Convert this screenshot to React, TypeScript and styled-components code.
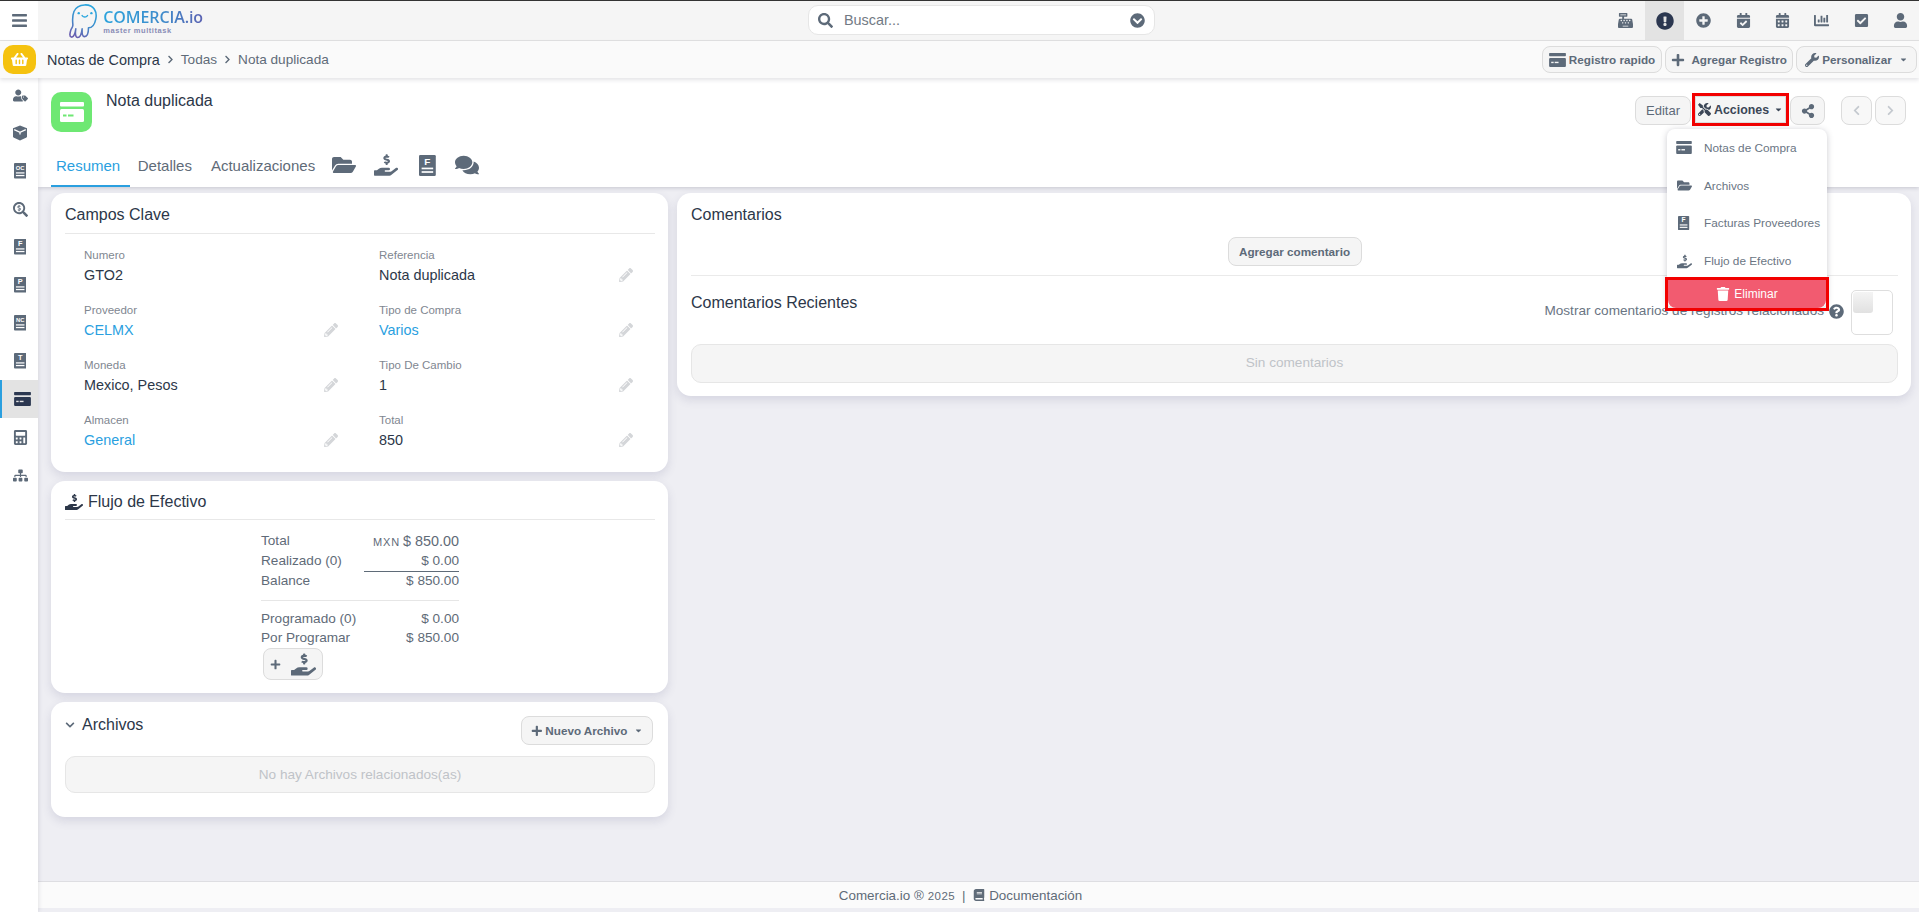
import React from "react";
import styled, { createGlobalStyle } from "styled-components";
import {
  FaBars, FaShoppingBasket, FaSearch, FaChevronCircleDown, FaCashRegister, FaExclamationCircle,
  FaPlusCircle, FaCalendarCheck, FaCalendarAlt, FaChartBar, FaCheckSquare, FaUser,
  FaPlus, FaWrench, FaCaretDown, FaUserTag, FaSearchDollar, FaCalculator, FaSitemap,
  FaTools, FaShareAlt, FaChevronLeft, FaChevronRight, FaFolderOpen, FaHandHoldingUsd, FaComments,
  FaPencilAlt, FaTrash, FaQuestionCircle, FaBook, FaChevronDown,
} from "react-icons/fa";

const Global = createGlobalStyle`
  html, body { margin: 0; padding: 0; height: 100%; overflow: hidden; }
  body { background: #eeeef3; font-family: "Liberation Sans", Arial, sans-serif; color: #2c3749; }
  * { box-sizing: border-box; }
`;

const slate = "#5d6a79";

const Page = styled.div`
  height: 912px;
  display: flex;
  flex-direction: column;
`;

/* top bar */
const TopBar = styled.header`
  height: 41px;
  flex: none;
  display: flex;
  align-items: stretch;
  background: #f5f5f5;
  border-top: 1px solid #333;
  border-bottom: 1px solid #e2e2e2;
`;
const MenuCell = styled.div`
  width: 38px;
  background: #fff;
  display: flex;
  align-items: center;
  justify-content: center;
  color: ${slate};
  font-size: 17px;
`;
const Logo = styled.div`
  width: 135px;
  margin-left: 30px;
  display: flex;
  align-items: center;
  gap: 6px;
`;
const LogoWords = styled.div`
  display: flex;
  flex-direction: column;
  padding-top: 2px;
`;
const LogoName = styled.span`
  font-family: "Open Sans", sans-serif;
  font-weight: 600;
  font-size: 16px;
  line-height: 17px;
  letter-spacing: -0.1px;
  white-space: nowrap;
  background: linear-gradient(90deg, #2ba3dc, #3f8bcb 60%, #5b62b2);
  -webkit-background-clip: text;
  background-clip: text;
  color: transparent;
`;
const LogoTag = styled.span`
  font-size: 7.5px;
  line-height: 9px;
  letter-spacing: 0.55px;
  font-weight: 700;
  color: #8a8db5;
  white-space: nowrap;
`;
const SearchBox = styled.div`
  width: 347px;
  height: 30px;
  margin: 4px 0 0 605px;
  background: #fff;
  border: 1px solid #e6e6e6;
  border-radius: 10px;
  display: flex;
  align-items: center;
  padding: 0 9px;
  color: ${slate};
  font-size: 15px;
`;
const SearchText = styled.span`
  margin-left: 11px;
  flex: 1;
  font-size: 14.4px;
  color: #727a84;
`;
const TopIcons = styled.nav`
  margin: 0 -1px 0 auto;
  display: flex;
`;
const TopIcon = styled.div<{ $active?: boolean }>`
  width: 39.3px;
  display: flex;
  align-items: center;
  justify-content: center;
  font-size: ${(p) => (p.$active ? 18 : 15)}px;
  color: ${(p) => (p.$active ? "#2b3750" : slate)};
  background: ${(p) => (p.$active ? "#e3e3e3" : "transparent")};
`;

/* breadcrumb */
const CrumbBar = styled.div`
  height: 37px;
  flex: none;
  position: relative;
  z-index: 3;
  background: #fafafa;
  box-shadow: 0 2px 4px rgba(60, 60, 80, 0.14);
  display: flex;
  align-items: center;
  padding: 0 2px 0 3px;
`;
const Basket = styled.div`
  width: 33px;
  height: 29px;
  border-radius: 10px;
  background: #f5c20f;
  color: #fff;
  font-size: 17px;
  display: flex;
  align-items: center;
  justify-content: center;
  margin-right: 11px;
`;
const Crumb = styled.span<{ $root?: boolean }>`
  font-size: ${(p) => (p.$root ? 14.4 : 13.6)}px;
  color: ${(p) => (p.$root ? "#2c3749" : "#5f6b78")};
`;
const CrumbSep = styled.span`
  display: inline-flex;
  margin: 0 6px;
  font-size: 9px;
  color: ${slate};
`;
const CrumbActions = styled.div`
  margin-left: auto;
  display: flex;
  gap: 3px;
`;
const Button = styled.button<{ $h?: number; $w?: number; $size?: number }>`
  height: ${(p) => p.$h ?? 29}px;
  ${(p) => (p.$w ? `width: ${p.$w}px;` : "")}
  padding: 0;
  display: inline-flex;
  align-items: center;
  justify-content: center;
  gap: 3px;
  border: 1px solid #dcdcdc;
  border-radius: 8px;
  background: #f5f5f5;
  color: ${slate};
  font-family: inherit;
  font-weight: 700;
  font-size: ${(p) => p.$size ?? 11.7}px;
  white-space: nowrap;
`;
const BarIconPlus = styled(FaPlus)`
  font-size: 14px;
`;
const BarIconWrench = styled(FaWrench)`
  font-size: 14px;
`;
const Caret = styled(FaCaretDown)`
  font-size: 9px;
  margin-left: 4px;
`;

/* body */
const Body = styled.div`
  flex: 1;
  min-height: 0;
  display: flex;
`;
const Sidebar = styled.aside`
  width: 38px;
  flex: none;
  margin-top: -2px;
  background: #fff;
  box-shadow: 1px 0 4px rgba(60, 60, 80, 0.12);
  position: relative;
  z-index: 2;
`;
const SideItem = styled.div<{ $active?: boolean }>`
  height: 38px;
  padding-left: ${(p) => (p.$active ? 7 : 2)}px;
  display: flex;
  align-items: center;
  justify-content: center;
  font-size: 15px;
  color: ${(p) => (p.$active ? "#2b3750" : slate)};
  background: ${(p) => (p.$active ? "#e3e3e3" : "transparent")};
  box-shadow: ${(p) => (p.$active ? "inset 2px 0 0 #2a9fdf" : "none")};
`;
const Main = styled.main`
  flex: 1;
  min-width: 0;
  display: flex;
  flex-direction: column;
`;
const PageHeader = styled.section`
  height: 109px;
  flex: none;
  background: #fff;
  box-shadow: 0 1px 4px rgba(60, 60, 80, 0.22);
  position: relative;
  z-index: 1;
  display: flex;
  flex-direction: column;
  justify-content: space-between;
`;
const HeaderTop = styled.div`
  display: flex;
  padding: 14px 13px 0;
`;
const GreenIcon = styled.div`
  width: 41px;
  height: 40px;
  border-radius: 10px;
  background: #6ee873;
  display: flex;
  align-items: center;
  justify-content: center;
`;
const Title = styled.h1`
  margin: 0 0 0 14px;
  font-size: 16px;
  font-weight: 400;
  line-height: 18px;
`;
const Actions = styled.div`
  margin: 4px 0 0 auto;
  display: flex;
  align-items: flex-start;
  position: relative;
`;
const ActionGroup = styled.div`
  display: flex;
  align-items: flex-start;
  gap: 4px;
  margin-right: 13px;
`;
const EditButton = styled(Button)`
  font-weight: 400;
  font-size: 13px;
`;
const AccionesButton = styled(Button)`
  outline: 3px solid #f20000;
  border-radius: 0;
  color: #3b4656;
  font-size: 12.4px;
`;
const AccionesCaret = styled(Caret)`
  margin-left: 2px;
`;
const ToolsIcon = styled(FaTools)`
  font-size: 13px;
`;
const ShareButton = styled(Button)`
  font-size: 14px;
`;
const NavButton = styled(Button)`
  color: #c4c9cf;
  background: #f8f8f8;
  font-size: 11px;
  margin-left: 3px;
`;
const Menu = styled.div`
  position: absolute;
  top: 33px;
  left: 32px;
  width: 160px;
  height: 179px;
  background: #fff;
  border-radius: 8px;
  box-shadow: 0 1px 6px rgba(50, 50, 70, 0.25);
  z-index: 10;
`;
const MenuItem = styled.div`
  height: 37.75px;
  display: flex;
  align-items: center;
  gap: 12px;
  padding-left: 9px;
  font-size: 11.8px;
  color: #6a7583;
`;
const MenuIcon = styled.span`
  width: 16px;
  display: flex;
  justify-content: center;
  font-size: 15px;
  color: ${slate};
`;
const DeleteItem = styled.div`
  position: absolute;
  left: 1px;
  right: 1px;
  bottom: 0;
  height: 28px;
  border-radius: 0 0 8px 8px;
  background: #f25b70;
  color: #fff;
  font-size: 12px;
  display: flex;
  align-items: center;
  justify-content: center;
  gap: 4px;
  &::after {
    content: "";
    position: absolute;
    inset: -3px;
    border: 3px solid #f20000;
  }
`;
const TrashIcon = styled(FaTrash)`
  font-size: 14px;
`;
const Tabs = styled.div`
  display: flex;
  align-items: center;
  height: 40px;
  margin-left: 13px;
`;
const Tab = styled.div<{ $active?: boolean; $mr: number }>`
  height: 100%;
  display: flex;
  align-items: center;
  padding: 0 10px 2px 5px;
  margin-right: ${(p) => p.$mr}px;
  font-size: 15px;
  color: ${(p) => (p.$active ? "#2a9fdf" : "#5f6b78")};
  border-bottom: 2px solid ${(p) => (p.$active ? "#2a9fdf" : "transparent")};
`;
const TabIcon = styled.span<{ $mr: number }>`
  display: flex;
  font-size: 24px;
  color: ${slate};
  margin: 0 ${(p) => p.$mr}px 4px 0;
`;

/* content */
const Content = styled.div`
  flex: 1;
  min-height: 0;
  display: grid;
  grid-template-columns: 617px 1fr;
  column-gap: 9px;
  align-items: start;
  padding: 6px 8px 0 13px;
`;
const Column = styled.div`
  display: flex;
  flex-direction: column;
  gap: 9px;
`;
const Card = styled.section`
  background: #fff;
  border-radius: 14px;
  padding: 0 13px 0 14px;
  box-shadow: 0 4px 10px rgba(90, 90, 130, 0.16);
`;
const CardHead = styled.div<{ $h: number }>`
  height: ${(p) => p.$h}px;
  padding-top: 3px;
  display: flex;
  align-items: center;
  gap: 5px;
  border-bottom: 1px solid #e8e8e8;
`;
const CardTitle = styled.h2`
  margin: 0;
  font-size: 16px;
  font-weight: 400;
  line-height: 18px;
  color: #2c3749;
`;
const FieldGrid = styled.div`
  display: grid;
  grid-template-columns: 295px 295px;
  row-gap: 19px;
  padding: 14px 0 23px;
`;
const Field = styled.div`
  padding: 0 22px 0 19px;
`;
const FieldLabel = styled.div`
  font-size: 11.5px;
  line-height: 14px;
  color: #7f8791;
  margin-bottom: 4px;
`;
const FieldValue = styled.div<{ $link?: boolean }>`
  height: 18px;
  display: flex;
  align-items: center;
  justify-content: space-between;
  font-size: 14.4px;
  color: ${(p) => (p.$link ? "#2a9fdf" : "#2c3749")};
`;
const Pencil = styled(FaPencilAlt)`
  font-size: 14px;
  color: #d4d6d9;
`;
const FlowIcon = styled(FaHandHoldingUsd)`
  font-size: 18px;
  color: #2c3749;
`;
const FlowTable = styled.div`
  width: 198px;
  margin: 11px auto 0;
`;
const FlowRow = styled.div<{ $h?: number }>`
  height: ${(p) => p.$h ?? 20}px;
  display: flex;
  justify-content: space-between;
  align-items: flex-start;
  font-size: 13.6px;
  line-height: 20px;
  color: #5f6b78;
`;
const FlowValue = styled.span<{ $under?: boolean }>`
  ${(p) => (p.$under ? "width: 95px; height: 21px; border-bottom: 1px solid #5f6b78;" : "")}
  text-align: right;
`;
const TotalAmount = styled.span`
  font-size: 14.4px;
`;
const Currency = styled.span`
  font-size: 11px;
  margin-right: 3px;
  letter-spacing: 0.8px;
`;
const FlowRule = styled.hr`
  margin: 9px 0 8px;
  border: 0;
  border-top: 1px solid #e6e6e6;
`;
const FlowButton = styled(Button)`
  width: 60px;
  height: 32px;
  margin: 0 0 13px 2px;
  gap: 10px;
  font-size: 11px;
  align-items: center;
`;
const FlowButtonHand = styled(FaHandHoldingUsd)`
  font-size: 25px;
`;
const FilesHead = styled.div`
  display: flex;
  align-items: flex-start;
  padding-top: 14px;
`;
const FilesTitle = styled.div`
  display: flex;
  align-items: center;
  gap: 7px;
`;
const Chevron = styled(FaChevronDown)`
  font-size: 10px;
  color: ${slate};
`;
const NewFile = styled(Button)`
  margin: 0 2px 0 auto;
  width: 132px;
`;
const EmptyBox = styled.div`
  height: 37px;
  border: 1px solid #e6e6e6;
  border-radius: 10px;
  background: #f5f5f5;
  color: #bfc3c8;
  font-size: 13.6px;
  display: flex;
  align-items: center;
  justify-content: center;
`;
const FilesBox = styled(EmptyBox)`
  margin: 11px 0 24px;
`;
const CommentsHead = styled.div`
  height: 40px;
  padding-top: 3px;
  display: flex;
  align-items: center;
`;
const CommentAction = styled.div`
  display: flex;
  justify-content: center;
  padding: 4px 0 9px;
  border-bottom: 1px solid #eaeaea;
`;
const AddComment = styled(Button)`
  width: 134px;
`;
const RecentRow = styled.div`
  height: 68px;
  display: flex;
  justify-content: space-between;
`;
const RecentTitle = styled(CardTitle)`
  margin-top: 18px;
`;
const RelatedToggle = styled.div`
  display: flex;
  align-items: flex-start;
  margin: 14px 5px 0 0;
`;
const RelatedText = styled.span`
  margin-top: 13px;
  font-size: 13.6px;
  line-height: 16px;
  color: #6a7583;
`;
const Help = styled(FaQuestionCircle)`
  margin: 14px 7px 0 5px;
  font-size: 15px;
  color: ${slate};
`;
const Toggle = styled.div`
  width: 42px;
  height: 45px;
  padding: 1px;
  border: 1px solid #dedede;
  border-radius: 5px;
  background: #fff;
`;
const Knob = styled.div`
  width: 20px;
  height: 21px;
  border-radius: 3px 0 3px 3px;
  background: linear-gradient(180deg, #f4f4f4, #e1e1e1);
`;
const CommentsBox = styled(EmptyBox)`
  height: 39px;
  margin-bottom: 13px;
  padding-bottom: 2px;
`;
const Footer = styled.footer`
  height: 27px;
  flex: none;
  margin-bottom: 4px;
  padding-right: 36px;
  display: flex;
  align-items: center;
  justify-content: center;
  gap: 4px;
  background: #fbfbfb;
  border-top: 1px solid #dedee2;
  font-size: 13.4px;
  color: #5f6b78;
`;
const FootYear = styled.span`
  font-size: 11.5px;
  letter-spacing: 0.4px;
  margin: 1px 3px 0 0;
`;
const FootBook = styled(FaBook)`
  font-size: 12px;
`;

/* drawn icons */
const CardGlyph: React.FC<{ w: number; h: number; color: string; mark: string }> = ({ w, h, color, mark }) => (
  <svg width={w} height={h} viewBox="0 0 24 20" aria-hidden="true">
    <rect x="0" y="0" width="24" height="4.5" rx="1" fill={color} />
    <rect x="0" y="7" width="24" height="13" rx="1.5" fill={color} />
    <rect x="3" y="12.5" width="3.5" height="2" fill={mark} />
    <rect x="8" y="12.5" width="5.5" height="2" fill={mark} />
  </svg>
);

const DocGlyph: React.FC<{ letter: string; size?: number }> = ({ letter, size = 20 }) => (
  <svg width={size * 0.8} height={size} viewBox="0 0 16 20" aria-hidden="true">
    <rect x="0" y="0" width="16" height="20" rx="1.2" fill={slate} />
    <text
      x="8"
      y="9.2"
      textAnchor="middle"
      fontFamily="Liberation Sans, sans-serif"
      fontWeight="700"
      fontSize={letter.length > 1 ? 7.5 : 9.5}
      fill="#fff"
    >
      {letter}
    </text>
    <rect x="2.5" y="12" width="11" height="1.6" fill="#fff" />
    <rect x="2.5" y="15.4" width="11" height="1.6" fill="#fff" />
  </svg>
);

const BoxGlyph: React.FC = () => (
  <svg width="16" height="16" viewBox="0 0 16 16" aria-hidden="true">
    <path d="M8 0.5 L15 3.2 V11.2 C15 12 14.6 12.5 14 12.8 L8 15.5 L2 12.8 C1.4 12.5 1 12 1 11.2 V3.2 Z" fill={slate} />
    <path d="M2.2 4.6 L8 7.4 L13.8 4.6" fill="none" stroke="#fff" strokeWidth="1.3" />
    <path d="M8 7.4 V9.5" fill="none" stroke="#fff" strokeWidth="1.3" />
  </svg>
);

const Octopus: React.FC = () => (
  <svg width="30" height="36" viewBox="0 0 30 36" fill="none" aria-hidden="true">
    <defs>
      <linearGradient id="octo" x1="0.7" y1="0" x2="0.3" y2="1">
        <stop offset="0" stopColor="#2aa6de" />
        <stop offset="0.55" stopColor="#3f8ccb" />
        <stop offset="1" stopColor="#6a5fb0" />
      </linearGradient>
    </defs>
    <path
      d="M5 22 C4 12 5 2 17 1.5 C27 1 30 9 28.5 16 C27.5 21 25 25 21 25 C21 29 20 34 17 34 C14 34 14.5 29 14.5 26 C14 30 13 35 10 35 C7 35 7.5 29 8 26 C7.5 30 6 35 3.5 34.5 C1 34 2 30 3 27 C4 25 5 24 5 22 Z"
      stroke="url(#octo)"
      strokeWidth="1.6"
      strokeLinejoin="round"
    />
    <circle cx="11" cy="10" r="1.2" fill="#2aa6de" />
    <circle cx="24" cy="10" r="1.2" fill="#2aa6de" />
    <path d="M14.5 12.5 C16 14.5 18.5 14.5 20 12.5" stroke="#2aa6de" strokeWidth="1.5" strokeLinecap="round" />
  </svg>
);

const fields = [
  { l: "Numero", v: "GTO2", noEdit: true },
  { l: "Referencia", v: "Nota duplicada" },
  { l: "Proveedor", v: "CELMX", link: true },
  { l: "Tipo de Compra", v: "Varios", link: true },
  { l: "Moneda", v: "Mexico, Pesos" },
  { l: "Tipo De Cambio", v: "1" },
  { l: "Almacen", v: "General", link: true },
  { l: "Total", v: "850" },
];

export default function App() {
  return (
    <Page>
      <Global />
      <TopBar>
        <MenuCell><FaBars /></MenuCell>
        <Logo>
          <Octopus />
          <LogoWords>
            <LogoName>COMERCIA.io</LogoName>
            <LogoTag>master multitask</LogoTag>
          </LogoWords>
        </Logo>
        <SearchBox>
          <FaSearch />
          <SearchText>Buscar...</SearchText>
          <FaChevronCircleDown />
        </SearchBox>
        <TopIcons>
          <TopIcon><FaCashRegister /></TopIcon>
          <TopIcon $active><FaExclamationCircle /></TopIcon>
          <TopIcon><FaPlusCircle /></TopIcon>
          <TopIcon><FaCalendarCheck /></TopIcon>
          <TopIcon><FaCalendarAlt /></TopIcon>
          <TopIcon><FaChartBar /></TopIcon>
          <TopIcon><FaCheckSquare /></TopIcon>
          <TopIcon><FaUser /></TopIcon>
        </TopIcons>
      </TopBar>

      <CrumbBar>
        <Basket><FaShoppingBasket /></Basket>
        <Crumb $root>Notas de Compra</Crumb>
        <CrumbSep><FaChevronRight /></CrumbSep>
        <Crumb>Todas</Crumb>
        <CrumbSep><FaChevronRight /></CrumbSep>
        <Crumb>Nota duplicada</Crumb>
        <CrumbActions>
          <Button $h={27} $w={120}><CardGlyph w={17} h={14} color={slate} mark="#f5f5f5" />Registro rapido</Button>
          <Button $h={27} $w={128}><BarIconPlus />&nbsp;Agregar Registro</Button>
          <Button $h={27} $w={121}><BarIconWrench />Personalizar<Caret /></Button>
        </CrumbActions>
      </CrumbBar>

      <Body>
        <Sidebar>
          <SideItem><FaUserTag /></SideItem>
          <SideItem><BoxGlyph /></SideItem>
          <SideItem><DocGlyph letter="OC" size={15.5} /></SideItem>
          <SideItem><FaSearchDollar /></SideItem>
          <SideItem><DocGlyph letter="F" size={15.5} /></SideItem>
          <SideItem><DocGlyph letter="P" size={15.5} /></SideItem>
          <SideItem><DocGlyph letter="NC" size={15.5} /></SideItem>
          <SideItem><DocGlyph letter="T" size={15.5} /></SideItem>
          <SideItem $active><CardGlyph w={17} h={14} color="#2b3750" mark="#e3e3e3" /></SideItem>
          <SideItem><FaCalculator /></SideItem>
          <SideItem><FaSitemap /></SideItem>
        </Sidebar>

        <Main>
          <PageHeader>
            <HeaderTop>
              <GreenIcon><CardGlyph w={24} h={20} color="#fff" mark="#6ee873" /></GreenIcon>
              <Title>Nota duplicada</Title>
              <Actions>
                <ActionGroup>
                  <EditButton $w={56}>Editar</EditButton>
                  <AccionesButton $w={91} $h={27}><ToolsIcon />Acciones<AccionesCaret /></AccionesButton>
                  <ShareButton $w={35}><FaShareAlt /></ShareButton>
                </ActionGroup>
                <NavButton $w={31}><FaChevronLeft /></NavButton>
                <NavButton $w={31}><FaChevronRight /></NavButton>
                <Menu>
                  <MenuItem><MenuIcon><CardGlyph w={16} h={13} color={slate} mark="#fff" /></MenuIcon>Notas de Compra</MenuItem>
                  <MenuItem><MenuIcon><FaFolderOpen /></MenuIcon>Archivos</MenuItem>
                  <MenuItem><MenuIcon><DocGlyph letter="F" size={14} /></MenuIcon>Facturas Proveedores</MenuItem>
                  <MenuItem><MenuIcon><FaHandHoldingUsd /></MenuIcon>Flujo de Efectivo</MenuItem>
                  <DeleteItem><TrashIcon />Eliminar</DeleteItem>
                </Menu>
              </Actions>
            </HeaderTop>
            <Tabs>
              <Tab $active $mr={2.5}>Resumen</Tab>
              <Tab $mr={4}>Detalles</Tab>
              <Tab $mr={7}>Actualizaciones</Tab>
              <TabIcon $mr={18}><FaFolderOpen /></TabIcon>
              <TabIcon $mr={21}><FaHandHoldingUsd /></TabIcon>
              <TabIcon $mr={19}><DocGlyph letter="F" size={21} /></TabIcon>
              <TabIcon $mr={0}><FaComments /></TabIcon>
            </Tabs>
          </PageHeader>

          <Content>
            <Column>
              <Card>
                <CardHead $h={41}><CardTitle>Campos Clave</CardTitle></CardHead>
                <FieldGrid>
                  {fields.map((f) => (
                    <Field key={f.l}>
                      <FieldLabel>{f.l}</FieldLabel>
                      <FieldValue $link={f.link}>
                        {f.v}
                        {!f.noEdit && <Pencil />}
                      </FieldValue>
                    </Field>
                  ))}
                </FieldGrid>
              </Card>
              <Card>
                <CardHead $h={39}><FlowIcon /><CardTitle>Flujo de Efectivo</CardTitle></CardHead>
                <FlowTable>
                  <FlowRow><span>Total</span><span><Currency>MXN</Currency><TotalAmount>$ 850.00</TotalAmount></span></FlowRow>
                  <FlowRow $h={20}><span>Realizado (0)</span><FlowValue $under>$ 0.00</FlowValue></FlowRow>
                  <FlowRow><span>Balance</span><span>$ 850.00</span></FlowRow>
                  <FlowRule />
                  <FlowRow $h={19}><span>Programado (0)</span><span>$ 0.00</span></FlowRow>
                  <FlowRow><span>Por Programar</span><span>$ 850.00</span></FlowRow>
                  <FlowButton><FaPlus /><FlowButtonHand /></FlowButton>
                </FlowTable>
              </Card>
              <Card>
                <FilesHead>
                  <FilesTitle><Chevron /><CardTitle>Archivos</CardTitle></FilesTitle>
                  <NewFile><FaPlus />Nuevo Archivo<Caret /></NewFile>
                </FilesHead>
                <FilesBox>No hay Archivos relacionados(as)</FilesBox>
              </Card>
            </Column>
            <Card>
              <CommentsHead><CardTitle>Comentarios</CardTitle></CommentsHead>
              <CommentAction><AddComment>Agregar comentario</AddComment></CommentAction>
              <RecentRow>
                <RecentTitle>Comentarios Recientes</RecentTitle>
                <RelatedToggle>
                  <RelatedText>Mostrar comentarios de registros relacionados</RelatedText>
                  <Help />
                  <Toggle><Knob /></Toggle>
                </RelatedToggle>
              </RecentRow>
              <CommentsBox>Sin comentarios</CommentsBox>
            </Card>
          </Content>

          <Footer>
            Comercia.io ®
            <FootYear>2025</FootYear>
            |&nbsp;
            <FootBook />
            Documentación
          </Footer>
        </Main>
      </Body>
    </Page>
  );
}
